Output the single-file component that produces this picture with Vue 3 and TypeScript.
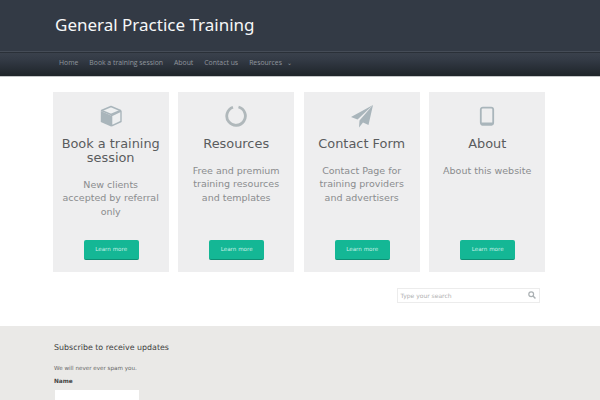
<script setup lang="ts">
interface Card { title: string; text: string; icon: string }
const cards: Card[] = [
  { title: 'Book a training session', text: 'New clients accepted by referral only', icon: 'box' },
  { title: 'Resources', text: 'Free and premium training resources and templates', icon: 'ring' },
  { title: 'Contact Form', text: 'Contact Page for training providers and advertisers', icon: 'plane' },
  { title: 'About', text: 'About this website', icon: 'tablet' },
]
const links = ['Home', 'Book a training session', 'About', 'Contact us', 'Resources']
</script>

<template>
  <div class="page">
    <header class="header">
      <div class="brand"><h1>General Practice Training</h1></div>
      <nav class="nav">
        <a v-for="l in links" :key="l">{{ l }}<span v-if="l === 'Resources'" class="caret">⌄</span></a>
      </nav>
    </header>

    <section class="cards">
      <article v-for="c in cards" :key="c.title" class="card">
        <div class="icon">
          <svg v-if="c.icon === 'box'" width="24" height="24" viewBox="0 0 24 24">
            <path d="M12 2.5 L21.5 6.5 L12 10.5 L2.5 6.5 Z" fill="#eef0f1" stroke="#a9b5bb" stroke-width="1.4" stroke-linejoin="round"/>
            <path d="M1.8 7 L12 11.5 V22.5 L1.8 18 Z" fill="#a9b5bb"/>
            <path d="M22 7.2 L12.6 11.5 V21.8 L22 17.5 Z" fill="#eef0f1" stroke="#a9b5bb" stroke-width="1.4" stroke-linejoin="round"/>
          </svg>
          <svg v-else-if="c.icon === 'ring'" width="24" height="24" viewBox="0 0 24 24">
            <path d="M14.5 3 A9.3 9.3 0 1 1 9 3.2" fill="none" stroke="#b0b8bb" stroke-width="2.8"/>
          </svg>
          <svg v-else-if="c.icon === 'plane'" width="24" height="24" viewBox="0 0 24 24">
            <path d="M23 1 L1 13 L7.5 15.5 Z M23 1 L9.5 16.5 L9 23.5 L13 18.5 L18.5 21 Z" fill="#a9b5bb"/>
          </svg>
          <svg v-else width="24" height="24" viewBox="0 0 24 24">
            <rect x="5.8" y="3.6" width="12.4" height="17" rx="2" fill="none" stroke="#a9b5bb" stroke-width="1.8"/>
            <path d="M5.5 18.6 H18.5 V19.5 Q18.5 21.4 16.5 21.4 H7.5 Q5.5 21.4 5.5 19.5 Z" fill="#a9b5bb"/>
          </svg>
        </div>
        <h2>{{ c.title }}</h2>
        <p>{{ c.text }}</p>
        <a class="btn">Learn more</a>
      </article>
    </section>

    <div class="search-row">
      <div class="search">
        <span>Type your search</span>
        <svg width="8" height="8" viewBox="0 0 10 10">
          <circle cx="4" cy="4" r="3" fill="none" stroke="#aab0b3" stroke-width="1.5"/>
          <path d="M6.3 6.3 L9.3 9.3" stroke="#aab0b3" stroke-width="1.8"/>
        </svg>
      </div>
    </div>

    <footer class="footer">
      <h3>Subscribe to receive updates</h3>
      <p>We will never ever spam you.</p>
      <label>Name</label>
      <div class="field"></div>
    </footer>
  </div>
</template>

<style>
html, body { margin: 0; overflow: hidden; background: #fff; }
</style>

<style scoped>
.page {
  width: 600px;
  height: 400px;
  overflow: hidden;
  font-family: "DejaVu Sans", sans-serif;
  display: flex;
  flex-direction: column;
}
.header { background: #333a45; height: 77px; flex: none; box-sizing: border-box; border-bottom: 1px solid #c4c6c8; }
.brand { height: 52px; box-sizing: border-box; padding: 13px 0 0 55px; border-bottom: 1px solid #454c57; }
.brand h1 { margin: 0; font-family: "Noto Sans", sans-serif; font-size: 17px; font-weight: 400; line-height: 24px; color: #f6f7f8; }
.nav {
  height: 24px;
  box-sizing: border-box;
  padding: 0 0 5px 59px;
  display: flex;
  gap: 11px;
  align-items: center;
  background: linear-gradient(#3a414c 0, #333a45 30%, #1e2429 100%);
  border-top: 1px solid #2a3038;
}
.nav a { font-family: "Open Sans", sans-serif; font-size: 6.85px; color: #90969d; white-space: nowrap; }
.caret { margin-left: 5px; font-size: 6px; }
.cards {
  flex: none;
  margin: 15px 0 0 52.7px;
  display: grid;
  grid-template-columns: repeat(4, 116px);
  column-gap: 9.5px;
  height: 179.5px;
}
.card {
  background: #eeeeef;
  display: flex;
  flex-direction: column;
  align-items: center;
  text-align: center;
  padding: 12px 6px 0;
  position: relative;
}
.icon { height: 24px; display: flex; }
.card h2 {
  margin: 8.5px 0 0;
  font-size: 12.9px;
  font-weight: 400;
  line-height: 14px;
  color: #5a5c5e;
}
.card p {
  margin: 13.5px 0 0;
  max-width: 100px;
  font-size: 9.5px;
  line-height: 13.3px;
  color: #8a8c8e;
}
.btn {
  position: absolute;
  left: 31px;
  top: 148px;
  width: 55px;
  height: 20px;
  box-sizing: border-box;
  background: #14b795;
  border-bottom: 1px solid #0e8f74;
  border-radius: 2px;
  color: #c8efe5;
  font-size: 5.6px;
  line-height: 19px;
  text-align: center;
}
.search-row { flex: none; display: flex; justify-content: flex-end; padding: 16px 60.5px 0 0; }
.search {
  width: 143px;
  height: 15px;
  box-sizing: border-box;
  border: 1px solid #ececec;
  display: flex;
  align-items: center;
  justify-content: space-between;
  padding: 0 3px 0 3px;
  font-size: 6px;
  color: #b0b0b0;
}
.footer {
  margin-top: 23px;
  flex: 1;
  background: #eae9e7;
  padding: 16px 0 0 54px;
}
.footer h3 { margin: 0; font-size: 7.9px; font-weight: 400; line-height: 11px; color: #3e3e3e; }
.footer p { margin: 11px 0 0; font-size: 5.6px; line-height: 8px; color: #666; }
.footer label { display: block; margin-top: 5px; font-size: 5.8px; font-weight: 700; line-height: 8px; color: #444; }
.field { margin: 5px 0 0 1px; width: 84px; height: 20px; background: #fff; }
</style>
